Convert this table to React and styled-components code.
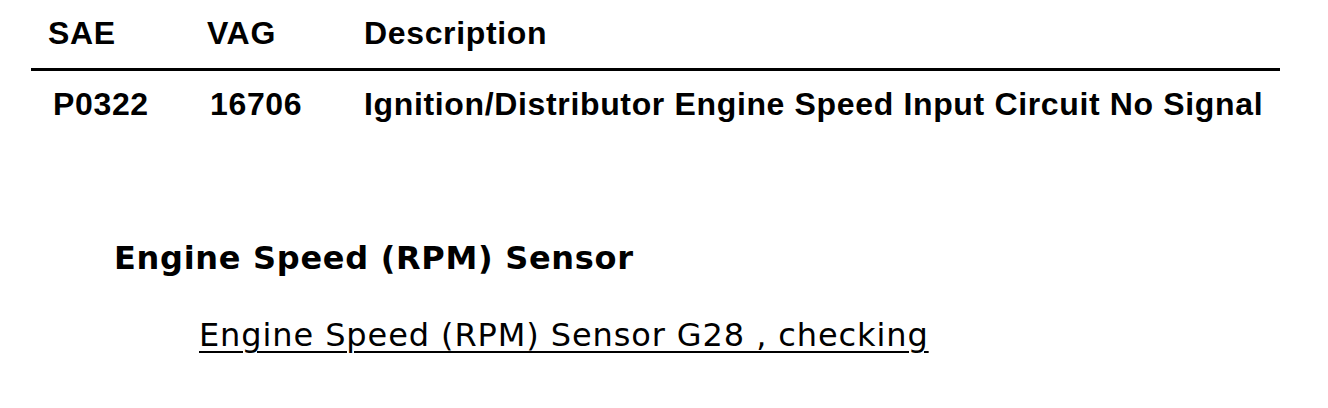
import React from 'react';
import styled, { createGlobalStyle } from 'styled-components';

const GlobalStyle = createGlobalStyle`
  html, body {
    margin: 0;
    padding: 0;
    background: #fff;
  }
`;

const Page = styled.div`
  width: 1328px;
  height: 408px;
  background: #fff;
  color: #000;
  overflow: hidden;
`;

const Table = styled.div`
  margin-left: 31px;
  width: 1249px;
  display: grid;
  grid-template-columns: 159px 174px 1fr;
  font-family: "Liberation Sans", Arial, sans-serif;
  font-weight: bold;
  font-size: 32px;
  letter-spacing: 0.65px;
  line-height: 32px;
`;

const HeadCell = styled.div`
  padding: 17px 0 19px ${({ indent }) => indent}px;
  border-bottom: 3px solid #000;
`;

const Cell = styled.div`
  padding: 17px 0 0 ${({ indent }) => indent}px;
`;

const Section = styled.div`
  padding: 122px 0 0 114px;
`;

const SectionTitle = styled.div`
  font-family: "DejaVu Sans", Verdana, sans-serif;
  font-weight: bold;
  font-size: 32px;
  line-height: 32px;
  letter-spacing: 0.7px;
`;

const LinkRow = styled.div`
  padding: 45px 0 0 199px;
`;

const DocLink = styled.a`
  font-family: "DejaVu Sans", Verdana, sans-serif;
  font-size: 32px;
  line-height: 32px;
  letter-spacing: 0.9px;
  color: #000;
  text-decoration: underline;
  text-decoration-thickness: 2px;
  text-underline-offset: 5px;
`;

const App = () => {
  return (
    <Page>
      <GlobalStyle />
      <Table>
        <HeadCell indent={17}>SAE</HeadCell>
        <HeadCell indent={17}>VAG</HeadCell>
        <HeadCell indent={0}>Description</HeadCell>
        <Cell indent={22}>P0322</Cell>
        <Cell indent={20}>16706</Cell>
        <Cell indent={0}>Ignition/Distributor Engine Speed Input Circuit No Signal</Cell>
      </Table>
      <Section>
        <SectionTitle>Engine Speed (RPM) Sensor</SectionTitle>
      </Section>
      <LinkRow>
        <DocLink href="#">Engine Speed (RPM) Sensor G28 , checking</DocLink>
      </LinkRow>
    </Page>
  );
};

export default App;
